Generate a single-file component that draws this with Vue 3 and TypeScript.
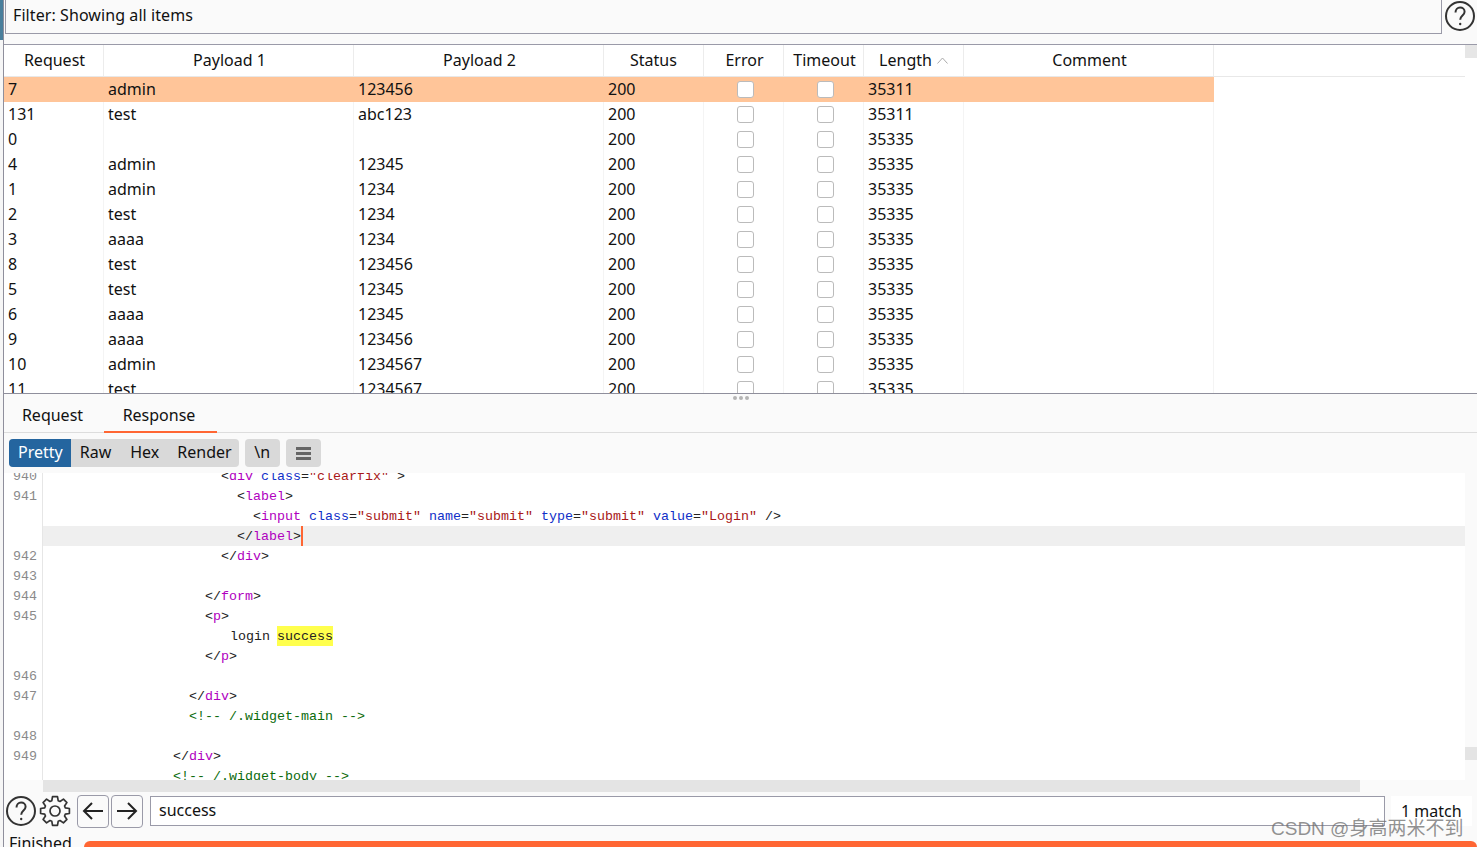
<script setup lang="ts">
interface Row { id: string; p1: string; p2: string; len: string }
interface Seg { t: string; c: string }
interface Line { no: string; indent: number; segs: Seg[]; active?: boolean }

const columns = ['Request', 'Payload 1', 'Payload 2', 'Status', 'Error', 'Timeout', 'Length', 'Comment']
const rows: Row[] = [
  { id: '7', p1: 'admin', p2: '123456', len: '35311' },
  { id: '131', p1: 'test', p2: 'abc123', len: '35311' },
  { id: '0', p1: '', p2: '', len: '35335' },
  { id: '4', p1: 'admin', p2: '12345', len: '35335' },
  { id: '1', p1: 'admin', p2: '1234', len: '35335' },
  { id: '2', p1: 'test', p2: '1234', len: '35335' },
  { id: '3', p1: 'aaaa', p2: '1234', len: '35335' },
  { id: '8', p1: 'test', p2: '123456', len: '35335' },
  { id: '5', p1: 'test', p2: '12345', len: '35335' },
  { id: '6', p1: 'aaaa', p2: '12345', len: '35335' },
  { id: '9', p1: 'aaaa', p2: '123456', len: '35335' },
  { id: '10', p1: 'admin', p2: '1234567', len: '35335' },
  { id: '11', p1: 'test', p2: '1234567', len: '35335' },
]
const lines: Line[] = [
  { no: '940', indent: 178, segs: [{ t: '<', c: 'p' }, { t: 'div', c: 'tag' }, { t: ' ', c: 'p' }, { t: 'class', c: 'attr' }, { t: '=', c: 'p' }, { t: '"clearfix"', c: 'str' }, { t: ' >', c: 'p' }] },
  { no: '941', indent: 194, segs: [{ t: '<', c: 'p' }, { t: 'label', c: 'tag' }, { t: '>', c: 'p' }] },
  { no: '', indent: 210, segs: [{ t: '<', c: 'p' }, { t: 'input', c: 'tag' }, { t: ' ', c: 'p' }, { t: 'class', c: 'attr' }, { t: '=', c: 'p' }, { t: '"submit"', c: 'str' }, { t: ' ', c: 'p' }, { t: 'name', c: 'attr' }, { t: '=', c: 'p' }, { t: '"submit"', c: 'str' }, { t: ' ', c: 'p' }, { t: 'type', c: 'attr' }, { t: '=', c: 'p' }, { t: '"submit"', c: 'str' }, { t: ' ', c: 'p' }, { t: 'value', c: 'attr' }, { t: '=', c: 'p' }, { t: '"Login"', c: 'str' }, { t: ' />', c: 'p' }] },
  { no: '', indent: 194, active: true, segs: [{ t: '</', c: 'p' }, { t: 'label', c: 'tag' }, { t: '>', c: 'p' }] },
  { no: '942', indent: 178, segs: [{ t: '</', c: 'p' }, { t: 'div', c: 'tag' }, { t: '>', c: 'p' }] },
  { no: '943', indent: 0, segs: [] },
  { no: '944', indent: 162, segs: [{ t: '</', c: 'p' }, { t: 'form', c: 'tag' }, { t: '>', c: 'p' }] },
  { no: '945', indent: 162, segs: [{ t: '<', c: 'p' }, { t: 'p', c: 'tag' }, { t: '>', c: 'p' }] },
  { no: '', indent: 187, segs: [{ t: 'login ', c: 'p' }, { t: 'success', c: 'hit' }] },
  { no: '', indent: 162, segs: [{ t: '</', c: 'p' }, { t: 'p', c: 'tag' }, { t: '>', c: 'p' }] },
  { no: '946', indent: 0, segs: [] },
  { no: '947', indent: 146, segs: [{ t: '</', c: 'p' }, { t: 'div', c: 'tag' }, { t: '>', c: 'p' }] },
  { no: '', indent: 146, segs: [{ t: '<!-- /.widget-main -->', c: 'cm' }] },
  { no: '948', indent: 0, segs: [] },
  { no: '949', indent: 130, segs: [{ t: '</', c: 'p' }, { t: 'div', c: 'tag' }, { t: '>', c: 'p' }] },
  { no: '', indent: 130, segs: [{ t: '<!-- /.widget-body -->', c: 'cm' }] },
]

// Eight chunky teeth around the centre of a 32px box.
function gearPath(): string {
  const pts: string[] = []
  const n = 8
  for (let i = 0; i < n; i++) {
    const a = (i * Math.PI * 2) / n
    const at = (r: number, d: number) => {
      const x = 16 + r * Math.sin(a + d)
      const y = 16 - r * Math.cos(a + d)
      return `${x.toFixed(2)} ${y.toFixed(2)}`
    }
    pts.push(at(10.8, -0.3), at(14.6, -0.17), at(14.6, 0.17), at(10.8, 0.3))
  }
  return 'M' + pts.join('L') + 'Z'
}
const gear = gearPath()
</script>

<template>
  <div class="app">
    <div class="edge"><div class="edge-desktop"></div></div>
    <div class="main">
      <div class="filter-row">
        <div class="filter">Filter: Showing all items</div>
        <svg class="help" width="30" height="32" viewBox="0 0 30 32" fill="none" stroke="#333" stroke-width="2">
          <circle cx="15" cy="16" r="14" />
          <path d="M10.5 12.5c0-3 2-5 4.6-5s4.5 1.8 4.5 4.2c0 3.8-4.4 3.8-4.4 8" />
          <circle cx="15.2" cy="24" r="1.2" fill="#333" stroke="none" />
        </svg>
      </div>

      <section class="table">
        <div class="table-main">
          <div class="thead">
            <div v-for="c in columns" :key="c" class="th">
              {{ c }}
              <svg v-if="c === 'Length'" class="sort" width="11" height="7" viewBox="0 0 11 7" fill="none" stroke="#aaa" stroke-width="1"><path d="M.5 6.5 5.5 1l5 5.5" /></svg>
            </div>
          </div>
          <div class="tbody">
            <div v-for="(r, i) in rows" :key="r.id" class="tr" :class="{ selected: i === 0 }">
              <div class="td">{{ r.id }}</div>
              <div class="td">{{ r.p1 }}</div>
              <div class="td">{{ r.p2 }}</div>
              <div class="td">200</div>
              <div class="td center"><span class="check"></span></div>
              <div class="td center"><span class="check"></span></div>
              <div class="td">{{ r.len }}</div>
              <div class="td"></div>
            </div>
          </div>
        </div>
        <div class="vtrack"><div class="vthumb"></div></div>
      </section>

      <div class="pane">
        <div class="splitter"><i></i><i></i><i></i></div>
        <div class="tabs">
          <div class="tab">Request</div>
          <div class="tab active">Response</div>
        </div>
        <div class="toolbar">
          <div class="seg">
            <span class="seg-btn on">Pretty</span>
            <span class="seg-btn">Raw</span>
            <span class="seg-btn">Hex</span>
            <span class="seg-btn">Render</span>
          </div>
          <span class="tool">\n</span>
          <span class="tool menu"><i></i><i></i><i></i></span>
        </div>

        <div class="editor">
          <div class="code">
            <div class="lines">
              <div v-for="(l, i) in lines" :key="i" class="line" :class="{ active: l.active }">
                <div class="no">{{ l.no }}</div>
                <div class="src" :style="{ paddingLeft: l.indent + 'px' }"><span v-for="(s, j) in l.segs" :key="j" :class="s.c">{{ s.t }}</span><span v-if="l.active" class="caret"></span></div>
              </div>
            </div>
            <div class="htrack"><div class="hthumb"></div></div>
          </div>
          <div class="etrack"><div class="ethumb"></div></div>
        </div>

        <div class="search">
          <svg class="sicon" width="32" height="32" viewBox="0 0 32 32" fill="none" stroke="#333" stroke-width="2">
            <circle cx="16" cy="16" r="14" />
            <path d="M11.5 12.5c0-3 2-5 4.6-5s4.5 1.8 4.5 4.2c0 3.8-4.4 3.8-4.4 8" />
            <circle cx="16.2" cy="24" r="1.2" fill="#333" stroke="none" />
          </svg>
          <svg class="sicon gear" width="32" height="32" viewBox="0 0 32 32" fill="none" stroke="#333" stroke-width="1.7" stroke-linejoin="round">
            <path :d="gear" />
            <circle cx="16" cy="16" r="5" />
          </svg>
          <button class="nav first"><svg width="24" height="20" viewBox="0 0 24 20" fill="none" stroke="#222" stroke-width="2"><path d="M22 10H3M11 2l-8 8 8 8" /></svg></button>
          <button class="nav"><svg width="24" height="20" viewBox="0 0 24 20" fill="none" stroke="#222" stroke-width="2"><path d="M2 10h19M13 2l8 8-8 8" /></svg></button>
          <div class="query">success</div>
          <div class="count">1 match</div>
        </div>

        <div class="status">
          <span class="finished">Finished</span>
          <div class="progress"></div>
        </div>
      </div>
    </div>
    <div class="watermark">CSDN @身高两米不到</div>
  </div>
</template>

<style>
html, body { margin: 0; background: #fff; }
</style>

<style scoped>
.app {
  width: 1477px;
  height: 847px;
  overflow: hidden;
  position: relative;
  display: flex;
  background: #fafafa;
  color: #111;
  font-family: "Noto Sans", "Noto Sans CJK SC", sans-serif;
  font-size: 16px;
}
.edge { width: 4px; flex: none; background: #f6f6f6; border-right: 1px solid #8f8f9c; box-sizing: border-box; }
.edge-desktop { width: 3px; height: 40px; background: #4a7f9c; }
.main { flex: 1; min-width: 0; display: flex; flex-direction: column; }

.filter-row { height: 45px; flex: none; display: flex; padding-left: 1px; box-sizing: border-box; border-bottom: 1px solid #9a9aa8; }
.filter {
  width: 1437px;
  height: 34px;
  box-sizing: border-box;
  padding: 0 7px 4px;
  line-height: 30px;
  letter-spacing: 0.08px;
  border: 1px solid #9a9aa8;
  border-top: 0;
  background: #fafafa;
}
.help { margin: 0 0 0 3px; flex: none; }

.table { height: 348px; flex: none; display: flex; background: #fff; border-bottom: 1px solid #8f8f9c; box-sizing: content-box; }
.table-main { flex: 1; min-width: 0; display: flex; flex-direction: column; }
.thead { display: grid; grid-template-columns: 100px 250px 250px 100px 80px 80px 100px 250px; height: 32px; flex: none; border-bottom: 1px solid #e8e8e8; box-sizing: border-box; }
.th { display: flex; align-items: center; justify-content: center; gap: 5px; padding: 0 0 2px 2px; border-right: 1px solid #ececec; box-sizing: border-box; }
.th:nth-child(4), .th:nth-child(7) { padding-left: 0; }
.sort { margin-top: 1px; }
.tbody { flex: 1; overflow: hidden; }
.tr { display: grid; grid-template-columns: 100px 250px 250px 100px 80px 80px 100px 250px; height: 25px; width: 1210px; }
.tr.selected { background: #ffc599; }
.td { border-right: 1px solid #f4f4f4; padding-left: 4px; line-height: 25px; box-sizing: border-box; white-space: nowrap; overflow: hidden; }
.selected .td { border-right-color: transparent; }
.td.center { display: flex; align-items: center; justify-content: center; padding-left: 0; }
.check { width: 17px; height: 17px; box-sizing: border-box; border: 1px solid #bbb; border-radius: 3px; background: #fff; margin-left: 3px; }
.vtrack { width: 12px; flex: none; background: #fff; }
.vthumb { height: 13px; background: #e6e6e6; }

.pane { flex: 1; min-height: 0; display: flex; flex-direction: column; position: relative; }
.splitter { position: absolute; top: 2px; left: 729px; display: flex; gap: 2px; }
.splitter i { width: 4px; height: 4px; border-radius: 50%; background: #b4b4b4; }
.tabs { height: 39px; flex: none; display: flex; border-bottom: 1px solid #ddd; box-sizing: border-box; padding-top: 4px; }
.tab { width: 100px; text-align: center; line-height: 34px; box-sizing: border-box; padding-right: 3px; }
.tab.active { width: 113px; border-bottom: 2px solid #ff6633; height: 35px; }
.toolbar { height: 40px; flex: none; display: flex; align-items: center; gap: 6px; padding-left: 5px; box-sizing: border-box; }
.seg { display: flex; height: 28px; background: #d9d9d9; border-radius: 4px; overflow: hidden; }
.seg-btn { padding: 0 9px; line-height: 27px; }
.seg-btn:nth-child(2) { padding-right: 10px; }
.seg-btn:last-child { padding-right: 7px; }
.seg-btn.on { background: #24659f; color: #fff; padding-right: 8px; }
.tool { width: 35px; height: 28px; box-sizing: border-box; text-align: center; line-height: 27px; background: #d9d9d9; border-radius: 4px; }
.menu { display: flex; flex-direction: column; justify-content: center; align-items: center; gap: 2px; }
.menu i { width: 15px; height: 3px; background: #666; }

.editor { height: 319px; flex: none; display: flex; background: #fff; }
.code { flex: 1; min-width: 0; display: flex; flex-direction: column; }
.lines { height: 307px; overflow: hidden; flex: none; }
.line { display: flex; height: 20px; font-family: "Liberation Mono", monospace; font-size: 13.33px; line-height: 22px; }
.line:first-child { margin-top: -7px; }
.no { width: 39px; flex: none; text-align: right; padding-right: 5px; box-sizing: border-box; color: #8a8a8a; border-right: 1px solid #e6e6e6; height: 20px; }
.src { flex: 1; white-space: pre; height: 20px; color: #222; }
.line.active .src { background: #efefef; }
.p { color: #222; }
.tag { color: #b000c0; }
.attr { color: #1030c8; }
.str { color: #a81818; }
.cm { color: #0b6b0b; }
.hit { display: inline-block; height: 20px; vertical-align: top; margin-left: -1px; background: #ffff4d; color: #222; }
.caret { display: inline-block; width: 2px; height: 20px; background: #ff6633; vertical-align: top; }
.htrack { height: 12px; flex: none; background: #fafafa; padding-left: 39px; }
.hthumb { width: 1317px; height: 12px; background: #e4e4e4; }
.etrack { width: 12px; flex: none; background: #fafafa; }
.ethumb { height: 13px; background: #e4e4e4; margin-top: 274px; }

.search { height: 36px; flex: none; display: flex; align-items: center; gap: 1px; padding: 2px 0 0 1px; box-sizing: border-box; }
.sicon { flex: none; }
.sicon.gear { margin-left: 1px; }
.nav { width: 32px; height: 33px; margin-left: 1px; padding: 0; background: #fafafa; border: 1px solid #9a9aa8; border-radius: 4px; display: flex; align-items: center; justify-content: center; flex: none; }
.nav.first { margin-left: 5px; }
.query { width: 1235px; height: 30px; margin-left: 6px; box-sizing: border-box; border: 1px solid #9a9aa8; background: #fff; padding-left: 8px; line-height: 27px; flex: none; }
.count { margin-left: 5px; padding: 0 10px; height: 30px; line-height: 30px; background: #fff; }
.status { height: 19px; flex: none; display: flex; align-items: flex-start; overflow: hidden; padding-left: 5px; }
.finished { line-height: 30px; width: 75px; flex: none; }
.progress { flex: 1; height: 6px; margin-top: 13px; background: #ff6633; border-radius: 6px 6px 0 0; }
.watermark {
  position: absolute;
  left: 1271px;
  top: 816px;
  font-size: 19px;
  line-height: 26px;
  color: rgba(110, 110, 110, 0.75);
  white-space: nowrap;
  font-family: "Liberation Sans", "Noto Sans CJK SC", sans-serif;
}
</style>
